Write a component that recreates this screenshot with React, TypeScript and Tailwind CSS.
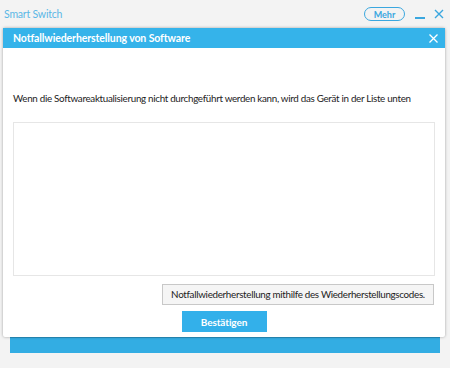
import React from "react";

const font = { fontFamily: 'Lato, "Open Sans", sans-serif' };

const App = () => {
  return (
    <div className="relative w-[450px] h-[368px] bg-[#f3f3f3] overflow-hidden" style={font}>
      {/* app window underneath */}
      <div className="flex h-[28px] items-center justify-between pl-[4px] pr-[6px]">
        <span className="text-[10.5px] tracking-[-0.2px] text-[#5ab7e6] leading-none">Smart Switch</span>
        <div className="flex items-center">
          <button className="h-[14px] w-[41px] rounded-full border border-[#3aa7df] text-[9px] font-bold text-[#3aa7df] leading-none">
            Mehr
          </button>
          <span className="ml-[10px] mt-[8px] block h-[2px] w-[10px] bg-[#3aa7df]" />
          <svg className="ml-[9px]" width="10" height="10" viewBox="0 0 10 10">
            <path d="M1 1L9 9M9 1L1 9" stroke="#3aa7df" strokeWidth="1.4" />
          </svg>
        </div>
      </div>
      <div className="flex flex-col h-[340px]">
        <div className="flex-1" />
        <div className="mx-[10px] mb-[15px] h-[16px] bg-[#33ade3] border-t border-[#2a94c4]" />
      </div>

      {/* dialog */}
      <div className="absolute left-[3px] top-[28px] w-[442px] h-[309px] bg-white flex flex-col rounded-[2px] shadow-[0_0_3px_rgba(0,0,0,0.35)]">
        <div className="flex h-[20px] items-center justify-between bg-[#35b3ea] pl-[10px] pr-[7px]">
          <span className="text-[10.5px] tracking-[-0.1px] font-bold text-white leading-none">Notfallwiederherstellung von Software</span>
          <svg width="9" height="9" viewBox="0 0 9 9">
            <path d="M0.5 0.5L8.5 8.5M8.5 0.5L0.5 8.5" stroke="#fff" strokeWidth="1.3" />
          </svg>
        </div>
        <div className="flex flex-col px-[10px]">
          <p className="mt-[43px] text-[9.8px] tracking-[-0.3px] text-[#222] leading-[14px] whitespace-nowrap">
            Wenn die Softwareaktualisierung nicht durchgeführt werden kann, wird das Gerät in der Liste unten
          </p>
          <div className="mt-[17px] h-[154px] border border-[#e6e6e6] bg-white" />
          <div className="mt-[8px] flex justify-end pr-[1px]">
            <button className="h-[21px] w-[272px] border border-[#c8c8c8] bg-[#f5f5f5] text-[9.8px] tracking-[-0.3px] text-[#222] leading-none whitespace-nowrap">
              Notfallwiederherstellung mithilfe des Wiederherstellungscodes.
            </button>
          </div>
          <div className="mt-[6px] flex justify-center">
            <button className="h-[21px] w-[85px] bg-[#33b0ea] text-[10px] tracking-[-0.1px] font-bold text-white leading-none">
              Bestätigen
            </button>
          </div>
        </div>
      </div>
    </div>
  );
};

export default App;
